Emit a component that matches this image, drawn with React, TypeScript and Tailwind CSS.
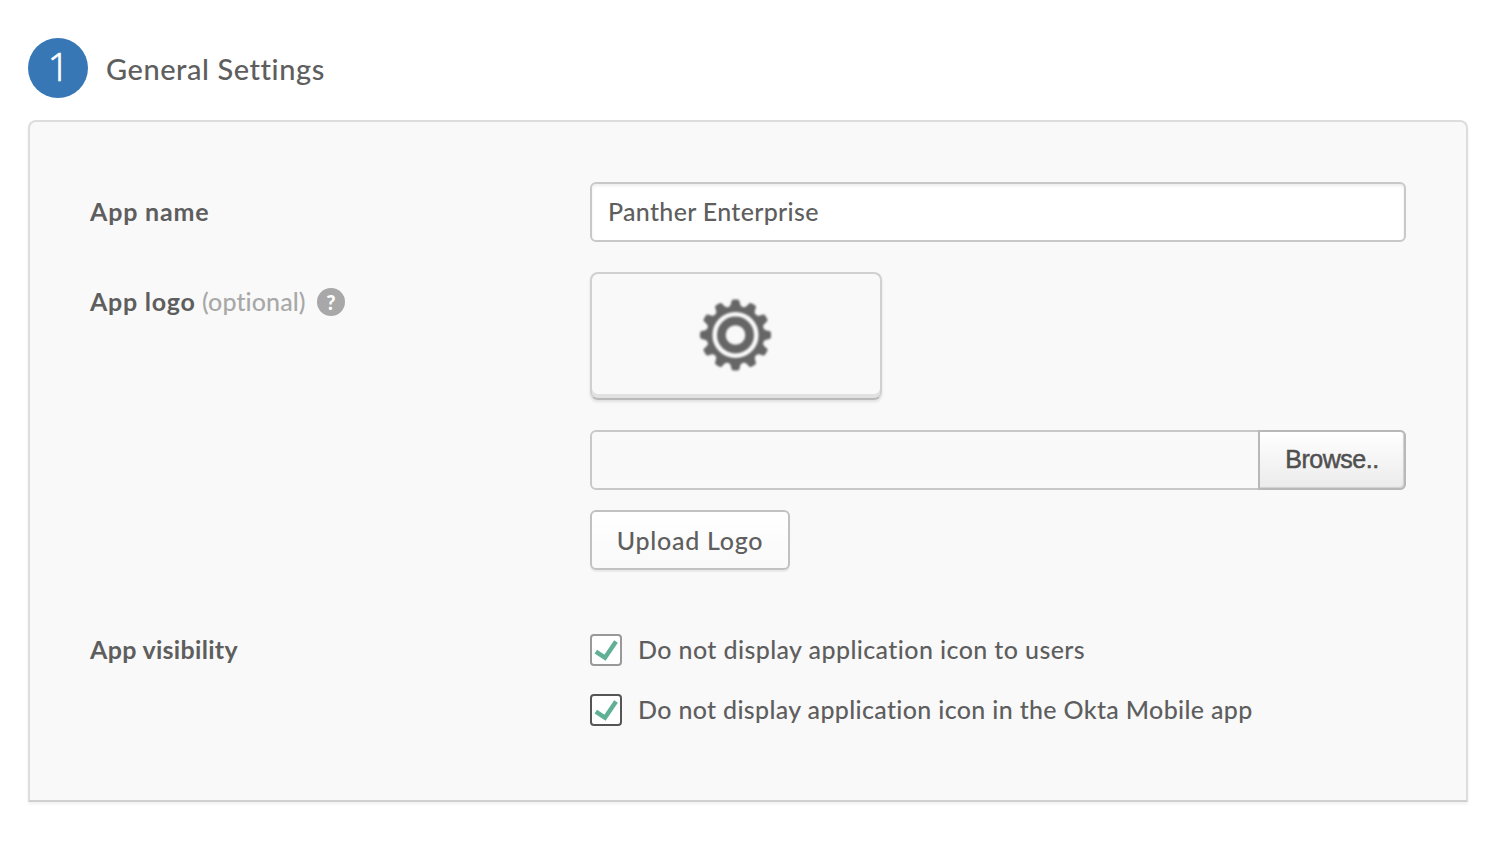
import { useState } from "react";

const TEETH = Array.from({ length: 12 }, (_, i) => i * 30);

function Gear() {
  return (
    <svg width="72" height="72" viewBox="-35.5 -36 72 72" className="blur-[0.8px]" aria-hidden="true">
      <g fill="#666666">
        {TEETH.map((a) => (
          <path
            key={a}
            transform={`rotate(${a})`}
            d="M-9 -26 Q-4.5 -28.5 -4.2 -33 Q-4 -35.5 -2 -35.5 H2 Q4 -35.5 4.2 -33 Q4.5 -28.5 9 -26 Z"
          />
        ))}
        <circle r="29" />
      </g>
      <circle r="20.8" fill="none" stroke="#f9f9f9" strokeWidth="4.6" />
      <circle r="9.8" fill="#f9f9f9" />
    </svg>
  );
}

function Checkbox({ label, border, tracking }: { label: string; border: string; tracking: string }) {
  const [checked, setChecked] = useState(true);
  return (
    <label className="flex h-8 items-center gap-4">
      <input type="checkbox" className="sr-only" checked={checked} onChange={() => setChecked(!checked)} />
      <span className={`flex size-8 shrink-0 items-center justify-center rounded-[4px] border-2 bg-white ${border}`}>
        {checked && (
          <svg width="28" height="28" viewBox="0 0 28 28" fill="none" aria-hidden="true">
            <path d="M3.8 15.7 L13 21.7 L24 5.5" stroke="#5fb095" strokeWidth="4.4" />
          </svg>
        )}
      </span>
      <span className={`pb-0.5 whitespace-nowrap ${tracking}`}>{label}</span>
    </label>
  );
}

export default function App() {
  return (
    <main className="h-[846px] w-[1504px] overflow-hidden bg-white px-7 pt-[38px] font-['Lato',sans-serif] text-[25px] leading-8 font-medium text-[#5e5e5e]">
      <header className="flex h-[60px] items-center gap-[18px]">
        <span className="flex size-[60px] items-center justify-center rounded-full bg-[#3777b5] pb-1 pl-px font-['Open_Sans',sans-serif] text-[38px] font-light text-white [-webkit-text-stroke:0.7px_white]">
          1
        </span>
        <h1 className="pt-0.5 text-[29px] tracking-[0.55px]">General Settings</h1>
      </header>

      <section className="mt-[22px] h-[682px] w-[1440px] rounded-t-[8px] border-2 border-[#dddddd] border-b-[#d0d0d0] bg-[#f9f9f9] px-[60px] pt-[60px] shadow-[0_2px_3px_rgba(0,0,0,0.06)]">
        <div className="flex h-[60px] items-center">
          <label className="w-[500px] pb-[3px] font-bold tracking-[0.8px]">App name</label>
          <input
            className="h-[60px] w-[816px] rounded-[6px] border-2 border-[#c8c8c8] bg-white px-4 pb-[3px] tracking-[0.32px] shadow-[inset_0_2px_3px_rgba(0,0,0,0.07)] outline-none"
            defaultValue="Panther Enterprise"
          />
        </div>

        <div className="mt-[30px] flex">
          <div className="flex h-[60px] w-[500px] items-center whitespace-nowrap">
            <span className="w-28 pb-0.5 font-bold tracking-[0.75px]">App logo</span>
            <span className="w-[115px] pb-0.5 tracking-[0.1px] text-[#a8a8a8]">(optional)</span>
            <span className="flex size-7 items-center justify-center rounded-full bg-[#a8a8a8] text-[20px] leading-none font-black text-white">
              ?
            </span>
          </div>
          <div className="flex flex-col">
            <div className="flex h-32 w-[292px] justify-center rounded-[8px] border-2 border-[#d0d0d0] border-b-[#b9b9b9] pt-[25px] shadow-[inset_0_-4px_0_#e1e1e1,0_2px_3px_rgba(0,0,0,0.1)]">
              <Gear />
            </div>
            <div className="mt-[30px] flex h-[60px] w-[816px] rounded-[6px] border-2 border-[#c8c8c8]">
              <div className="flex-1" />
              <button className="-my-0.5 -mr-0.5 h-[60px] w-[148px] rounded-r-[6px] border-2 border-[#b8b8b8] bg-linear-to-b from-white to-[#ebebeb] pb-0.5 font-['Liberation_Sans',sans-serif] text-[25px] tracking-[-0.5px] text-[#505050] shadow-[inset_-1px_-1px_1px_#d0d0d0]">
                <span className="[-webkit-text-stroke:0.5px_#505050]">Browse..</span>
              </button>
            </div>
            <button className="mt-5 h-[60px] w-[200px] rounded-[6px] border-2 border-[#c1c1c1] bg-linear-to-b from-white to-[#f9f9f9] whitespace-nowrap tracking-[0.75px] shadow-[0_2px_1px_rgba(0,0,0,0.06)]">
              Upload Logo
            </button>
          </div>
        </div>

        <div className="mt-16 flex">
          <span className="-mt-px w-[500px] font-bold tracking-[0.3px]">App visibility</span>
          <div className="flex flex-col gap-7">
            <Checkbox label="Do not display application icon to users" border="border-[#999999]" tracking="tracking-[0.4px]" />
            <Checkbox
              label="Do not display application icon in the Okta Mobile app"
              border="border-[#555555]"
              tracking="tracking-[0.335px]"
            />
          </div>
        </div>
      </section>
    </main>
  );
}
